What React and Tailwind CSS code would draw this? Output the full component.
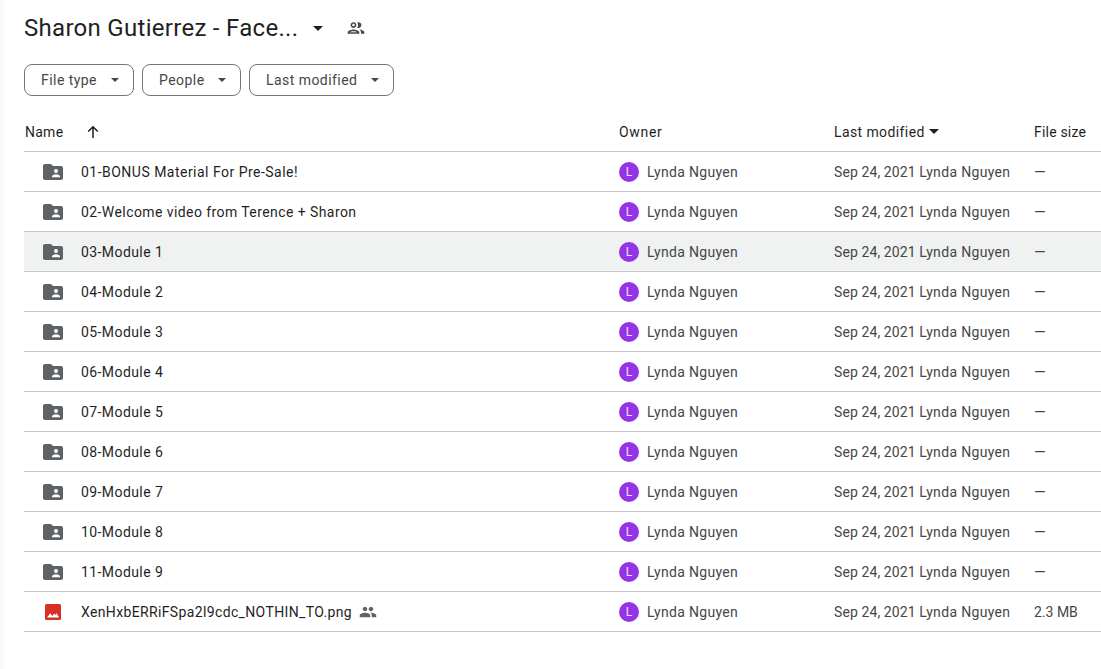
const names = ["01-BONUS Material For Pre-Sale!","02-Welcome video from Terence + Sharon","03-Module 1","04-Module 2","05-Module 3","06-Module 4","07-Module 5","08-Module 6","09-Module 7","10-Module 8","11-Module 9","XenHxbERRiFSpa2l9cdc_NOTHIN_TO.png"];

function Caret({ className }) {
  return <svg viewBox="0 0 10 5" className={className} fill="currentColor"><path d="M0 0l5 5 5-5z" /></svg>;
}
function FolderIcon() {
  return (
    <svg width="20" height="16" viewBox="0 0 20 16" className="text-[#5f6368]">
      <path fill="currentColor" d="M2 0h6l2 2h8c1.1 0 2 .9 2 2v10c0 1.1-.9 2-2 2H2c-1.1 0-2-.9-2-2V2C0 .9.9 0 2 0z" />
      <circle cx="13" cy="7" r="2" fill="#fff" />
      <path fill="#fff" d="M9 12.6c0-1.5 2.7-2.3 4-2.3s4 .8 4 2.3v.7H9z" />
    </svg>
  );
}
function ImageIcon() {
  return (
    <svg width="16" height="16" viewBox="0 0 16 16">
      <rect width="16" height="16" rx="1.5" fill="#d93025" />
      <path fill="#fff" d="M2 13.500l3.200-4.200 2.200 2.600 1.700-2.300 1.300 1.300 1.200-1.600 2.400 4.200z" />
    </svg>
  );
}
function PeopleFilled() {
  return (
    <svg width="18" height="18" viewBox="0 0 24 24" fill="#5f6368">
      <path d="M16 11c1.66 0 2.99-1.34 2.99-3S17.66 5 16 5s-3 1.34-3 3 1.34 3 3 3zm-8 0c1.66 0 2.99-1.34 2.99-3S9.66 5 8 5 5 6.34 5 8s1.34 3 3 3zm0 2c-2.33 0-7 1.17-7 3.5V19h14v-2.5C15 14.17 10.33 13 8 13zm8 0c-.29 0-.62.02-.97.05 1.16.84 1.97 1.97 1.97 3.45V19h6v-2.5c0-2.33-4.67-3.5-7-3.5z" />
    </svg>
  );
}
function PeopleOutline() {
  return (
    <svg width="20" height="20" viewBox="0 0 24 24" fill="#444746">
      <path d="M9 13.75c-2.34 0-7 1.17-7 3.5V19h14v-1.75c0-2.33-4.66-3.5-7-3.5zM4.34 17c.84-.58 2.87-1.25 4.66-1.25s3.82.67 4.66 1.25H4.34zM9 12c1.93 0 3.5-1.57 3.5-3.5S10.93 5 9 5 5.500 6.570 5.500 8.500 7.070 12 9 12zm0-5c.83 0 1.500.67 1.500 1.500S9.830 10 9 10s-1.500-.67-1.500-1.500S8.170 7 9 7zm7.040 6.810c1.160.84 1.960 1.960 1.960 3.440V19h4v-1.750c0-2.020-3.500-3.170-5.960-3.440zM15 12c1.930 0 3.500-1.570 3.500-3.500S16.930 5 15 5c-.540 0-1.040.130-1.500.350.630.890 1 1.980 1 3.150s-.370 2.260-1 3.150c.460.220.960.350 1.500.350z" />
    </svg>
  );
}
function Chip({ label, w }) {
  return (
    <div className={`flex h-8 items-center justify-between rounded-lg border border-[#747775] pl-4 pr-[14px] text-[14px] tracking-[0.45px] text-[#444746] ${w}`}>
      <span>{label}</span>
      <Caret className="h-[4px] w-[8px]" />
    </div>
  );
}

export default function App() {
  return (
    <div className="flex h-[669px] w-[1101px] overflow-hidden bg-white text-[14px] text-[#1f1f1f]" style={{ fontFamily: "Roboto, sans-serif" }}>
      <div className="w-[4px] shrink-0 bg-[#f8fafd]" />
      <main className="flex min-w-0 flex-1 flex-col pl-5">
        <div className="flex h-[56px] items-center">
          <h1 className="text-[24px] font-normal leading-7 tracking-[0.29px]">Sharon Gutierrez - Face...</h1>
          <Caret className="ml-[15px] h-[5px] w-[10px] text-[#1f1f1f]" />
          <span className="ml-[23px] flex"><PeopleOutline /></span>
        </div>
        <div className="mt-2 flex gap-2">
          <Chip label="File type" w="w-[110px]" />
          <Chip label="People" w="w-[99px]" />
          <Chip label="Last modified" w="w-[145px]" />
        </div>
        <div className="mt-4 flex h-[40px] items-center border-b border-[#c7c7c7] text-[14px] tracking-[0.4px]">
          <div className="flex w-[595px] items-center pl-px">
            <span className="pt-[2px] tracking-[0.25px]">Name</span>
            <svg width="14" height="14" viewBox="0 0 14 14" className="ml-[23px]" fill="none" stroke="#1f1f1f" strokeWidth="1.5"><path d="M7 13V2M2.200 6.500l4.800-4.800 4.800 4.800" /></svg>
          </div>
          <div className="w-[215px] pt-[2px] tracking-[0.7px]">Owner</div>
          <div className="flex w-[200px] items-center gap-[4px]">
            <span className="pt-[2px]">Last modified</span>
            <Caret className="h-[5px] w-[10px]" />
          </div>
          <div className="pt-[2px] tracking-[0.2px]">File size</div>
        </div>
        {names.map((n, i) => (
          <div key={n} className={`flex h-[40px] items-center border-b border-[#c7c7c7] ${i === 2 ? "bg-[#f0f2f1]" : ""}`}>
            <div className="flex w-[595px] items-center">
              <div className={`flex w-[57px] ${i === 11 ? "pl-[21px]" : "pl-[19px]"}`}>{i === 11 ? <ImageIcon /> : <FolderIcon />}</div>
              <span className={`pt-[2px] ${i === 11 ? "tracking-[0.36px]" : i === 0 ? "tracking-[0.48px]" : "tracking-[0.42px]"}`}>{n}</span>
              {i === 11 && <span className="ml-[7px] flex"><PeopleFilled /></span>}
            </div>
            <div className="flex w-[215px] items-center gap-2 text-[#444746]">
              <div className="flex h-5 w-5 items-center justify-center rounded-full bg-[#9334e6] text-[12px] text-[#f0e4fc]">L</div>
              <span className="pt-[2px] tracking-[0.33px]">Lynda Nguyen</span>
            </div>
            <div className="w-[200px] whitespace-nowrap pt-[2px] text-[#444746]">
              <span className="tracking-[0.1px]">Sep 24, 2021</span> <span className="tracking-[0.33px]">Lynda Nguyen</span>
            </div>
            <div className="pt-[2px] text-[15px] text-[#444746]">{i === 11 ? <span className="text-[14px]">2.3 MB</span> : "—"}</div>
          </div>
        ))}
      </main>
    </div>
  );
}
